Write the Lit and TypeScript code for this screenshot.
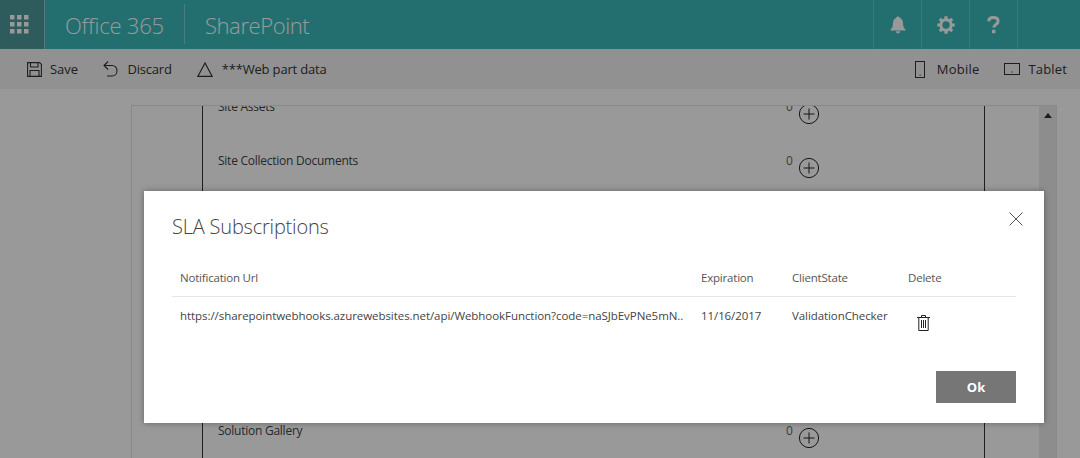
import { LitElement, html, css, svg } from "lit";
import { customElement } from "lit/decorators.js";

const FONT = `"Open Sans", "Noto Sans", sans-serif`;
const rows = ["Site Assets", "Site Collection Documents", "", "", "", "", "Solution Gallery"];

@customElement("app-root")
export class AppRoot extends LitElement {
  static styles = css`
    :host { display: block; width: 1080px; height: 458px; position: relative; overflow: hidden; font-family: ${css([FONT] as any as TemplateStringsArray)}; background: #fff; }
    .header { height: 49px; background: #3bbaba; display: flex; align-items: stretch; color: #fff; }
    .waffle { background: #4d9999; border-right: 1px solid #8fd0d0; display: flex; align-items: center; padding-left: 10px; box-sizing: content-box; width: 34px; }
    .brand { display: flex; align-items: center; padding: 0 20px 0 20px; font-size: 22px; font-weight: 300; letter-spacing: -0.2px; color: #fff; }
    .brand.sp { letter-spacing: -0.4px; }
    .sep { width: 1px; background: #7fd0d0; margin: 4px 0 5px; }
    .hspace { flex: 1; }
    .hbtn { width: 47px; border-left: 1px solid #5cc8c8; display: flex; align-items: center; justify-content: center; }
    .hbtn.last { width: 62px; border-left: 1px solid #5cc8c8; }
    .toolbar { height: 40px; background: #f2f2f2; display: flex; align-items: center; font-size: 13px; letter-spacing: -0.2px; color: #333; padding: 0 13px 0 27px; }
    .tool { display: flex; align-items: center; gap: 8px; margin-right: 25px; }
    .tool.save { margin-right: 25.5px; letter-spacing: -0.05px; }
    .tool.disc { gap: 9px; margin-right: 25px; }
    .tool.tri { margin-right: 0; gap: 9px; letter-spacing: -0.17px; }
    .tool.mob { margin-right: 24px; gap: 12px; letter-spacing: 0.25px; }
    .tool.tab { margin-right: 0; gap: 9px; letter-spacing: 0.15px; }
    .content { padding: 16px 23px 0 131px; }
    .panel { border: 1px solid #e4e4e4; border-bottom: none; height: 353px; display: flex; overflow: hidden; }
    .gutter { width: 70px; }
    .list { width: 781px; border-left: 1px solid #333; border-right: 1px solid #333; box-sizing: content-box; overflow: hidden; }
    .rows { margin-top: -7px; }
    .row { height: 54.05px; display: flex; padding-left: 15px; font-size: 12px; letter-spacing: -0.25px; color: #444; }
    .name { width: 568px; line-height: 16px; }
    .count { width: 13px; line-height: 16px; color: #666; }
    .plus { margin-top: 4px; margin-left: -1px; }
    .sb { width: 17px; margin-left: auto; background: #ececec; display: flex; justify-content: center; padding-top: 7px; box-sizing: border-box; }
    .overlay { position: absolute; inset: 0; background: rgba(0,0,0,.4); padding: 191px 0 0 144px; box-sizing: border-box; }
    .modal { width: 900px; height: 232px; background: #fff; box-shadow: 0 0 6px rgba(0,0,0,.35); box-sizing: border-box; padding: 22px 28px 0; position: relative; color: #444; }
    .title { font-size: 20px; font-weight: 300; letter-spacing: -0.2px; line-height: 28px; color: #444; }
    .close { position: absolute; top: 21px; right: 21px; }
    .grid { display: grid; grid-template-columns: 521px 91px 116px 116px; font-size: 11.5px; letter-spacing: -0.2px; margin-top: 19px; }
    .cell { padding: 0 8px; line-height: 16px; white-space: nowrap; overflow: hidden; }
    .th { height: 37px; padding-top: 10px; box-sizing: border-box; border-bottom: 1px solid #e6e6e6; color: #555; }
    .td { padding-top: 11px; color: #444; letter-spacing: -0.08px; }
    .td.url { letter-spacing: -0.06px; }
    .trash { padding: 18px 0 0 17px; }
    .foot { display: flex; justify-content: flex-end; margin-top: 37px; }
    .ok { width: 80px; height: 32px; background: #767676; color: #fff; border: none; font: 700 13px ${css([FONT] as any as TemplateStringsArray)}; padding: 0; }
  `;

  private plusIcon() {
    return html`<svg class="plus" width="22" height="22" viewBox="0 0 22 22" fill="none" stroke="#222" stroke-width="1"><circle cx="11" cy="11" r="9.6"/><path d="M11 5.500v11M5.500 11h11"/></svg>`;
  }

  render() {
    const waffle = [0, 7, 14].flatMap((y) => [0, 7, 14].map((x) => svg`<rect x=${x} y=${y} width="4.5" height="4.5"/>`));
    return html`
      <div class="header">
        <div class="waffle"><svg width="19" height="19" viewBox="0 0 19 19" fill="#fff">${waffle}</svg></div>
        <div class="brand">Office 365</div>
        <div class="sep"></div>
        <div class="brand sp">SharePoint</div>
        <div class="hspace"></div>
        <div class="hbtn"><svg width="16" height="18" viewBox="0 0 16 18" fill="#fff"><path d="M8 0.5c1 0 1.700.6 1.800 1.400C12 2.600 13 4.600 13 7c0 3 .6 5 2.400 6.600.4.4.1.9-.4.9H1c-.5 0-.8-.5-.4-.9C2.400 12 3 10 3 7c0-2.400 1-4.400 3.200-5.100C6.300 1.100 7 .5 8 .5z"/><path d="M5.800 15.300h4.400C10 16.600 9.100 17.500 8 17.500s-2-.9-2.200-2.200z"/></svg></div>
        <div class="hbtn"><svg width="18" height="18" viewBox="0 0 18 18" fill="none"><circle cx="9" cy="9" r="5.200" stroke="#fff" stroke-width="3"/><path stroke="#fff" stroke-width="3.200" d="M9 .3v3M9 14.700v3M.3 9h3M14.700 9h3M2.800 2.800l2.100 2.100M13.100 13.100l2.100 2.100M2.800 15.200l2.100-2.100M13.100 4.900l2.100-2.100"/></svg></div>
        <div class="hbtn"><svg width="13" height="18" viewBox="0 0 13 18" fill="none"><path d="M1.800 5.200C1.800 2.800 3.800 1.600 6.300 1.600c2.700 0 4.800 1.300 4.800 3.700 0 3.200-4.300 3.200-4.300 6.200" stroke="#fff" stroke-width="3"/><rect x="5" y="13.800" width="3.400" height="3.400" fill="#fff"/></svg></div>
        <div class="hbtn last"></div>
      </div>
      <div class="toolbar">
        <div class="tool save"><svg width="15" height="15" viewBox="0 0 15 15" fill="none" stroke="#333" stroke-width="1.100"><path d="M.6.6h12l1.800 1.800v12H.6z"/><path d="M3.500.6v4.400h7.500V.6M3 14.400V8.500h9v5.900"/></svg><span>Save</span></div>
        <div class="tool disc"><svg width="15" height="16" viewBox="0 0 15 16" fill="none" stroke="#333" stroke-width="1.100"><path d="M5 .5L1 4.500l4 4M1 4.500h8c3 0 5 2 5 5s-2 5.500-5 5.500H4"/></svg><span>Discard</span></div>
        <div class="tool tri"><svg width="16" height="15" viewBox="0 0 16 15" fill="none" stroke="#333" stroke-width="1.200"><path d="M8 1L.9 14.300h14.200z"/></svg><span>***Web part data</span></div>
        <div class="hspace"></div>
        <div class="tool mob"><svg width="10" height="17" viewBox="0 0 10 17" fill="none" stroke="#333" stroke-width="1"><rect x=".5" y=".5" width="9" height="16"/><path d="M4.500 14h1.200"/></svg><span>Mobile</span></div>
        <div class="tool tab"><svg width="16" height="12" viewBox="0 0 16 12" fill="none" stroke="#333" stroke-width="1"><rect x=".5" y=".5" width="15" height="11"/><path d="M7.500 9h1.200"/></svg><span>Tablet</span></div>
      </div>
      <div class="content">
        <div class="panel">
          <div class="gutter"></div>
          <div class="list"><div class="rows">
            ${rows.map((r) => html`<div class="row">${r ? html`<div class="name">${r}</div><div class="count">0</div>${this.plusIcon()}` : ""}</div>`)}
          </div></div>
          <div class="sb"><svg width="8" height="5" viewBox="0 0 8 5" fill="#333"><path d="M4 0l4 5H0z"/></svg></div>
        </div>
      </div>
      <div class="overlay">
        <div class="modal">
          <div class="title">SLA Subscriptions</div>
          <svg class="close" width="14" height="14" viewBox="0 0 14 14" stroke="#555" stroke-width="1" fill="none"><path d="M.5.500l13 13M13.500.500l-13 13"/></svg>
          <div class="grid">
            <div class="cell th">Notification Url</div>
            <div class="cell th">Expiration</div>
            <div class="cell th">ClientState</div>
            <div class="cell th">Delete</div>
            <div class="cell td url">https://sharepointwebhooks.azurewebsites.net/api/WebhookFunction?code=naSJbEvPNe5mN..</div>
            <div class="cell td">11/16/2017</div>
            <div class="cell td">ValidationChecker</div>
            <div class="trash"><svg width="13" height="16" viewBox="0 0 13 16" fill="none" stroke="#222" stroke-width="1"><path d="M0 2.500h13M4.500 2.500V.5h4v2M1.800 2.500v13h9.400v-13M4.500 5v8M6.500 5v8M8.500 5v8"/></svg></div>
          </div>
          <div class="foot"><button class="ok">Ok</button></div>
        </div>
      </div>
    `;
  }
}
